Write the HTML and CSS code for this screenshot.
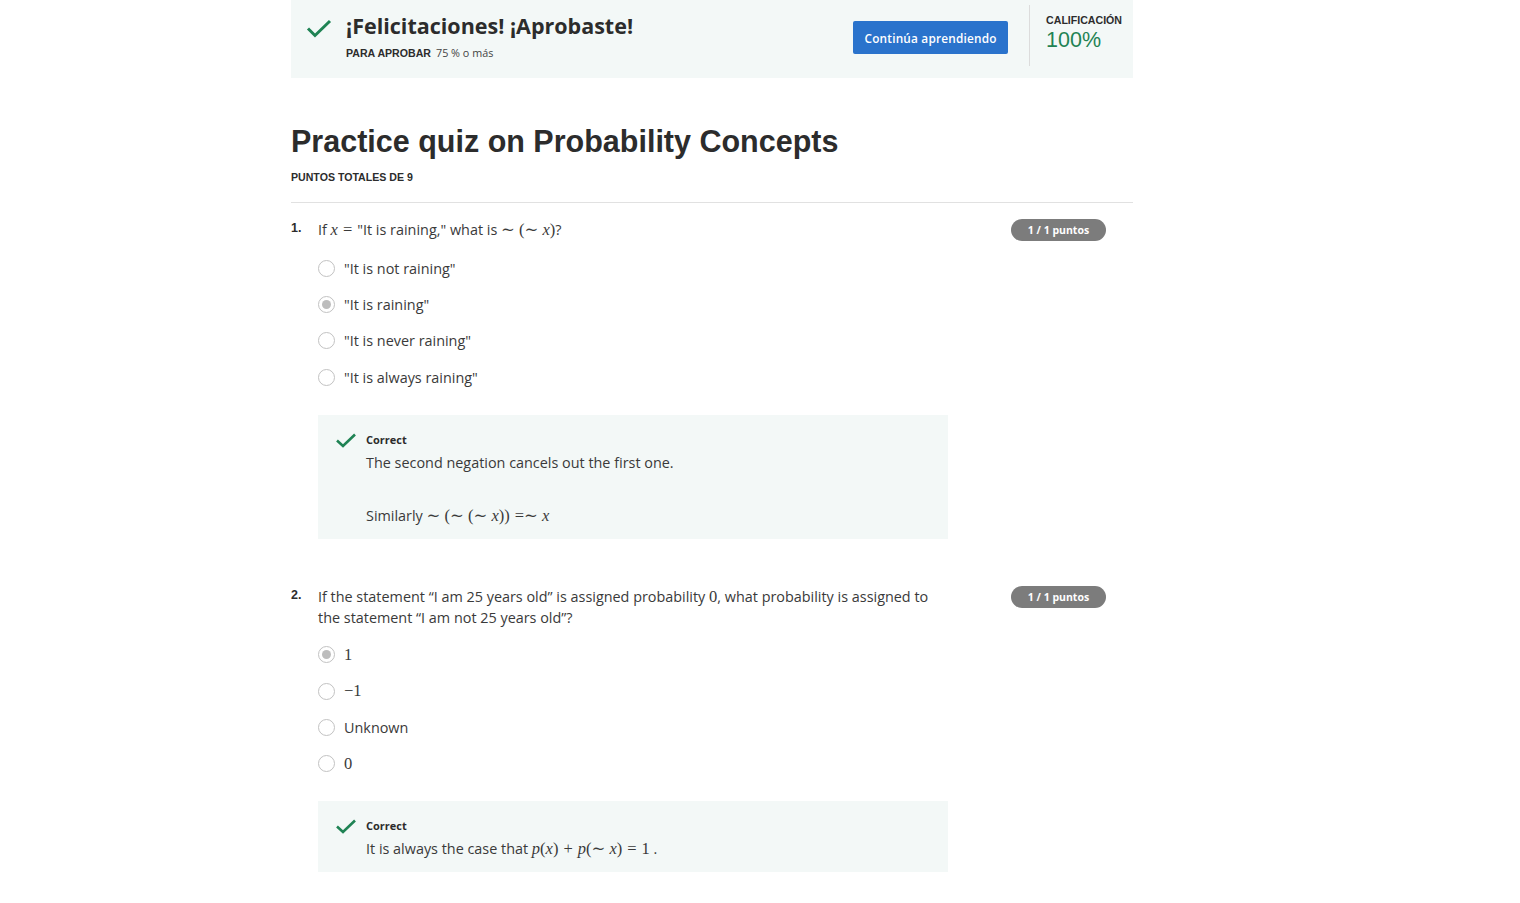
FILE: index.html
```html
<!DOCTYPE html>
<html lang="es">
<head>
<meta charset="utf-8">
<title>Practice quiz on Probability Concepts</title>
<link rel="stylesheet" href="styles.css">
</head>
<body>
<div class="page">
  <section class="banner">
    <div class="banner-left">
      <svg class="banner-check" width="26" height="20" viewBox="0 0 26 20"><path d="M2 9.5 L9 16.5 L24 2" fill="none" stroke="#1f8354" stroke-width="3"/></svg>
      <div class="banner-text">
        <h2 class="banner-title">¡Felicitaciones! ¡Aprobaste!</h2>
        <div class="banner-sub"><span class="caps">PARA APROBAR</span><span class="pass">75 % o más</span></div>
      </div>
    </div>
    <div class="banner-right">
      <button class="btn">Continúa aprendiendo</button>
      <div class="divider"></div>
      <div class="grade">
        <div class="caps">CALIFICACIÓN</div>
        <div class="grade-value">100%</div>
      </div>
    </div>
  </section>

  <h1 class="title">Practice quiz on Probability Concepts</h1>
  <div class="caps total">PUNTOS TOTALES DE 9</div>
  <hr class="rule">

  <section class="question">
    <div class="q-head">
      <span class="q-num">1.</span>
      <div class="q-text">If <span class="m"><i>x</i><span class="rel">=</span></span>"It is raining," what is <span class="m">∼ (∼ <i>x</i>)</span>?</div>
      <span class="badge">1 / 1 puntos</span>
    </div>
    <ul class="options">
      <li class="option"><span class="radio"></span>"It is not raining"</li>
      <li class="option"><span class="radio checked"></span>"It is raining"</li>
      <li class="option"><span class="radio"></span>"It is never raining"</li>
      <li class="option"><span class="radio"></span>"It is always raining"</li>
    </ul>
    <div class="feedback">
      <svg class="fb-check" width="20" height="15" viewBox="0 0 20 15"><path d="M1 7.5 L7 13 L19 1.5" fill="none" stroke="#1f8354" stroke-width="2.6"/></svg>
      <div class="fb-body">
        <div class="fb-label">Correct</div>
        <p class="fb-text">The second negation cancels out the first one.</p>
        <p class="fb-text fb-gap">Similarly <span class="m">∼ (∼ (∼ <i>x</i>))<span class="rel rel-tight">=</span>∼ <i>x</i></span></p>
      </div>
    </div>
  </section>

  <section class="question q2">
    <div class="q-head">
      <span class="q-num">2.</span>
      <div class="q-text">If the statement “I am 25 years old” is assigned probability <span class="m">0</span>, what probability is assigned to the statement “I am not 25 years old”?</div>
      <span class="badge">1 / 1 puntos</span>
    </div>
    <ul class="options">
      <li class="option"><span class="radio checked"></span><span class="m">1</span></li>
      <li class="option"><span class="radio"></span><span class="m">−1</span></li>
      <li class="option"><span class="radio"></span>Unknown</li>
      <li class="option"><span class="radio"></span><span class="m">0</span></li>
    </ul>
    <div class="feedback">
      <svg class="fb-check" width="20" height="15" viewBox="0 0 20 15"><path d="M1 7.5 L7 13 L19 1.5" fill="none" stroke="#1f8354" stroke-width="2.6"/></svg>
      <div class="fb-body">
        <div class="fb-label">Correct</div>
        <p class="fb-text">It is always the case that <span class="m"><i>p</i>(<i>x</i>)<span class="rel">+</span><i>p</i>(∼ <i>x</i>)<span class="rel">=</span>1</span> .</p>
      </div>
    </div>
  </section>
</div>
</body>
</html>
```
FILE: styles.css
```css
* { box-sizing: border-box; }
body {
  margin: 0;
  background: #fff;
  font-family: "Open Sans", "Liberation Sans", sans-serif;
  color: #373a3c;
}
.page {
  width: 842px;
  margin-left: 291px;
}
.caps {
  font-family: "Liberation Sans", Arial, sans-serif;
  font-weight: 700;
  font-size: 10.6px;
  color: #2c2c2c;
}
.banner {
  height: 78px;
  background: #f3f8f7;
  display: flex;
  justify-content: space-between;
  padding: 0 11px 0 15px;
}
.banner-left {
  display: flex;
  align-items: flex-start;
  padding-top: 12px;
}
.banner-check {
  margin-top: 7px;
  margin-right: 14px;
}
.banner-title {
  margin: 0;
  font-size: 21.5px;
  line-height: 28px;
  font-weight: 700;
  color: #2c2c2c;
}
.banner-sub {
  margin-top: 5px;
  display: flex;
  align-items: baseline;
  line-height: 16px;
}
.pass {
  font-size: 10.8px;
  margin-left: 5px;
  color: #444;
}
.banner-right {
  display: flex;
  align-items: flex-start;
}
.btn {
  margin-top: 21px;
  height: 33px;
  width: 155px;
  background: #2a73cc;
  color: #fff;
  border: 0;
  border-radius: 2px;
  font-family: "Open Sans", sans-serif;
  font-size: 11.8px;
  font-weight: 600;
  letter-spacing: 0.2px;
  padding: 0;
}
.divider {
  width: 1px;
  height: 61px;
  margin-top: 5px;
  margin-left: 21px;
  margin-right: 16px;
  background: #dcdcdc;
}
.grade {
  padding-top: 13px;
}
.grade .caps {
  line-height: 14px;
}
.grade-value {
  font-family: "Liberation Sans", Arial, sans-serif;
  font-size: 21.5px;
  line-height: 26px;
  color: #1f8354;
  margin-top: 0;
}
.title {
  margin: 44px 0 0;
  font-family: "Liberation Sans", Arial, sans-serif;
  font-weight: 700;
  font-size: 30.5px;
  line-height: 38px;
  color: #2c2c2c;
}
.total {
  margin-top: 10px;
  line-height: 14px;
}
.rule {
  margin: 18px 0 0;
  border: 0;
  border-top: 1px solid #e1e1e1;
}
.question {
  margin-top: 16px;
}
.q2 {
  margin-top: 47px;
}
.q-head {
  display: flex;
  align-items: flex-start;
}
.q-num {
  width: 27px;
  flex: none;
  font-family: "Liberation Sans", Arial, sans-serif;
  font-weight: 700;
  font-size: 12.5px;
  line-height: 19px;
  color: #2c2c2c;
}
.q-text {
  width: 625px;
  font-size: 14.4px;
  line-height: 21px;
  color: #3a3a3a;
}
.badge {
  margin-left: auto;
  margin-right: 27px;
  width: 95px;
  height: 22px;
  line-height: 22px;
  border-radius: 11px;
  background: #7c7c7c;
  color: #fff;
  font-size: 10.5px;
  font-weight: 700;
  text-align: center;
  flex: none;
}
.m {
  font-family: "Liberation Serif", "DejaVu Serif", serif;
  font-size: 16.5px;
  line-height: 1;
}
.m i { font-style: italic; }
.rel {
  margin: 0 5px;
}
.rel-tight {
  margin-right: 0;
}
.options {
  list-style: none;
  margin: 9px 0 0 27px;
  padding: 0;
}
.option {
  display: flex;
  align-items: center;
  height: 36.4px;
  font-size: 14.4px;
  color: #3a3a3a;
}
.radio {
  width: 17px;
  height: 17px;
  border: 1.6px solid #c2c2c2;
  border-radius: 50%;
  margin-right: 9px;
  display: flex;
  align-items: center;
  justify-content: center;
  flex: none;
}
.radio.checked::after {
  content: "";
  width: 9px;
  height: 9px;
  border-radius: 50%;
  background: #bdbdbd;
}
.feedback {
  margin: 19px 0 0 27px;
  width: 630px;
  background: #f3f8f7;
  display: flex;
  align-items: flex-start;
  padding: 17px 0 13px 18px;
}
.fb-check {
  margin-top: 1px;
  margin-right: 10px;
  flex: none;
}
.fb-label {
  font-size: 11px;
  font-weight: 700;
  line-height: 16px;
  color: #2c2c2c;
}
.fb-text {
  margin: 4px 0 0;
  font-size: 14.4px;
  line-height: 21px;
  color: #3a3a3a;
}
.fb-gap {
  margin-top: 32px;
}
```
